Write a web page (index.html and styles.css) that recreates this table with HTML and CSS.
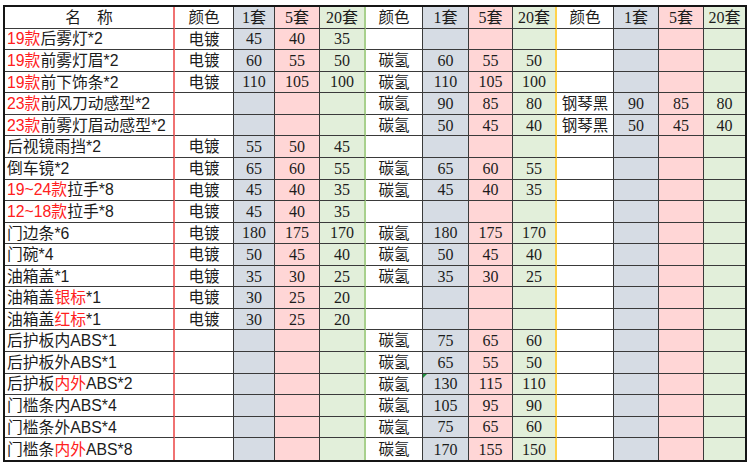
FILE: index.html
```html
<!DOCTYPE html>
<html lang="zh-CN">
<head>
<meta charset="utf-8">
<title>价格表</title>
<link rel="stylesheet" href="styles.css">
</head>
<body>
<div class="sheet">
  <div class="row head">
    <div class="c name center">名　称</div><div class="c clr">颜色</div><div class="c n">1套</div><div class="c n">5套</div><div class="c n g-end">20套</div>
    <div class="c clr">颜色</div><div class="c n">1套</div><div class="c n">5套</div><div class="c n y-end">20套</div>
    <div class="c clr">颜色</div><div class="c n">1套</div><div class="c n">5套</div><div class="c n last">20套</div>
  </div>
  <div class="row">
    <div class="c name"><span class="hl">19款</span>后雾灯*2</div><div class="c clr">电镀</div><div class="c n">45</div><div class="c n">40</div><div class="c n g-end">35</div>
    <div class="c clr"></div><div class="c n"></div><div class="c n"></div><div class="c n y-end"></div>
    <div class="c clr"></div><div class="c n"></div><div class="c n"></div><div class="c n last"></div>
  </div>
  <div class="row">
    <div class="c name"><span class="hl">19款</span>前雾灯眉*2</div><div class="c clr">电镀</div><div class="c n">60</div><div class="c n">55</div><div class="c n g-end">50</div>
    <div class="c clr">碳氢</div><div class="c n">60</div><div class="c n">55</div><div class="c n y-end">50</div>
    <div class="c clr"></div><div class="c n"></div><div class="c n"></div><div class="c n last"></div>
  </div>
  <div class="row">
    <div class="c name"><span class="hl">19款</span>前下饰条*2</div><div class="c clr">电镀</div><div class="c n">110</div><div class="c n">105</div><div class="c n g-end">100</div>
    <div class="c clr">碳氢</div><div class="c n">110</div><div class="c n">105</div><div class="c n y-end">100</div>
    <div class="c clr"></div><div class="c n"></div><div class="c n"></div><div class="c n last"></div>
  </div>
  <div class="row">
    <div class="c name"><span class="hl">23款</span>前风刀动感型*2</div><div class="c clr"></div><div class="c n"></div><div class="c n"></div><div class="c n g-end"></div>
    <div class="c clr">碳氢</div><div class="c n">90</div><div class="c n">85</div><div class="c n y-end">80</div>
    <div class="c clr">钢琴黑</div><div class="c n">90</div><div class="c n">85</div><div class="c n last">80</div>
  </div>
  <div class="row">
    <div class="c name"><span class="hl">23款</span>前雾灯眉动感型*2</div><div class="c clr"></div><div class="c n"></div><div class="c n"></div><div class="c n g-end"></div>
    <div class="c clr">碳氢</div><div class="c n">50</div><div class="c n">45</div><div class="c n y-end">40</div>
    <div class="c clr">钢琴黑</div><div class="c n">50</div><div class="c n">45</div><div class="c n last">40</div>
  </div>
  <div class="row">
    <div class="c name">后视镜雨挡*2</div><div class="c clr">电镀</div><div class="c n">55</div><div class="c n">50</div><div class="c n g-end">45</div>
    <div class="c clr"></div><div class="c n"></div><div class="c n"></div><div class="c n y-end"></div>
    <div class="c clr"></div><div class="c n"></div><div class="c n"></div><div class="c n last"></div>
  </div>
  <div class="row">
    <div class="c name">倒车镜*2</div><div class="c clr">电镀</div><div class="c n">65</div><div class="c n">60</div><div class="c n g-end">55</div>
    <div class="c clr">碳氢</div><div class="c n">65</div><div class="c n">60</div><div class="c n y-end">55</div>
    <div class="c clr"></div><div class="c n"></div><div class="c n"></div><div class="c n last"></div>
  </div>
  <div class="row">
    <div class="c name"><span class="hl">19~24款</span>拉手*8</div><div class="c clr">电镀</div><div class="c n">45</div><div class="c n">40</div><div class="c n g-end">35</div>
    <div class="c clr">碳氢</div><div class="c n">45</div><div class="c n">40</div><div class="c n y-end">35</div>
    <div class="c clr"></div><div class="c n"></div><div class="c n"></div><div class="c n last"></div>
  </div>
  <div class="row">
    <div class="c name"><span class="hl">12~18款</span>拉手*8</div><div class="c clr">电镀</div><div class="c n">45</div><div class="c n">40</div><div class="c n g-end">35</div>
    <div class="c clr"></div><div class="c n"></div><div class="c n"></div><div class="c n y-end"></div>
    <div class="c clr"></div><div class="c n"></div><div class="c n"></div><div class="c n last"></div>
  </div>
  <div class="row">
    <div class="c name">门边条*6</div><div class="c clr">电镀</div><div class="c n">180</div><div class="c n">175</div><div class="c n g-end">170</div>
    <div class="c clr">碳氢</div><div class="c n">180</div><div class="c n">175</div><div class="c n y-end">170</div>
    <div class="c clr"></div><div class="c n"></div><div class="c n"></div><div class="c n last"></div>
  </div>
  <div class="row">
    <div class="c name">门碗*4</div><div class="c clr">电镀</div><div class="c n">50</div><div class="c n">45</div><div class="c n g-end">40</div>
    <div class="c clr">碳氢</div><div class="c n">50</div><div class="c n">45</div><div class="c n y-end">40</div>
    <div class="c clr"></div><div class="c n"></div><div class="c n"></div><div class="c n last"></div>
  </div>
  <div class="row">
    <div class="c name">油箱盖*1</div><div class="c clr">电镀</div><div class="c n">35</div><div class="c n">30</div><div class="c n g-end">25</div>
    <div class="c clr">碳氢</div><div class="c n">35</div><div class="c n">30</div><div class="c n y-end">25</div>
    <div class="c clr"></div><div class="c n"></div><div class="c n"></div><div class="c n last"></div>
  </div>
  <div class="row">
    <div class="c name">油箱盖<span class="hl">银标</span>*1</div><div class="c clr">电镀</div><div class="c n">30</div><div class="c n">25</div><div class="c n g-end">20</div>
    <div class="c clr"></div><div class="c n"></div><div class="c n"></div><div class="c n y-end"></div>
    <div class="c clr"></div><div class="c n"></div><div class="c n"></div><div class="c n last"></div>
  </div>
  <div class="row">
    <div class="c name">油箱盖<span class="hl">红标</span>*1</div><div class="c clr">电镀</div><div class="c n">30</div><div class="c n">25</div><div class="c n g-end">20</div>
    <div class="c clr"></div><div class="c n"></div><div class="c n"></div><div class="c n y-end"></div>
    <div class="c clr"></div><div class="c n"></div><div class="c n"></div><div class="c n last"></div>
  </div>
  <div class="row">
    <div class="c name">后护板内ABS*1</div><div class="c clr"></div><div class="c n"></div><div class="c n"></div><div class="c n g-end"></div>
    <div class="c clr">碳氢</div><div class="c n">75</div><div class="c n">65</div><div class="c n y-end">60</div>
    <div class="c clr"></div><div class="c n"></div><div class="c n"></div><div class="c n last"></div>
  </div>
  <div class="row">
    <div class="c name">后护板外ABS*1</div><div class="c clr"></div><div class="c n"></div><div class="c n"></div><div class="c n g-end"></div>
    <div class="c clr">碳氢</div><div class="c n">65</div><div class="c n">55</div><div class="c n y-end">50</div>
    <div class="c clr"></div><div class="c n"></div><div class="c n"></div><div class="c n last"></div>
  </div>
  <div class="row">
    <div class="c name">后护板<span class="hl">内外</span>ABS*2</div><div class="c clr"></div><div class="c n"></div><div class="c n"></div><div class="c n g-end"></div>
    <div class="c clr">碳氢</div><div class="c n flag">130</div><div class="c n">115</div><div class="c n y-end">110</div>
    <div class="c clr"></div><div class="c n"></div><div class="c n"></div><div class="c n last"></div>
  </div>
  <div class="row">
    <div class="c name">门槛条内ABS*4</div><div class="c clr"></div><div class="c n"></div><div class="c n"></div><div class="c n g-end"></div>
    <div class="c clr">碳氢</div><div class="c n">105</div><div class="c n">95</div><div class="c n y-end">90</div>
    <div class="c clr"></div><div class="c n"></div><div class="c n"></div><div class="c n last"></div>
  </div>
  <div class="row">
    <div class="c name">门槛条外ABS*4</div><div class="c clr"></div><div class="c n"></div><div class="c n"></div><div class="c n g-end"></div>
    <div class="c clr">碳氢</div><div class="c n">75</div><div class="c n">65</div><div class="c n y-end">60</div>
    <div class="c clr"></div><div class="c n"></div><div class="c n"></div><div class="c n last"></div>
  </div>
  <div class="row">
    <div class="c name">门槛条<span class="hl">内外</span>ABS*8</div><div class="c clr"></div><div class="c n"></div><div class="c n"></div><div class="c n g-end"></div>
    <div class="c clr">碳氢</div><div class="c n">170</div><div class="c n">155</div><div class="c n y-end">150</div>
    <div class="c clr"></div><div class="c n"></div><div class="c n"></div><div class="c n last"></div>
  </div>
</div>
</body>
</html>
```

FILE: styles.css
```css
html, body {
  margin: 0;
  padding: 0;
  background: #ffffff;
}

body {
  padding: 5px 0 0 3px;
  font-family: "Liberation Sans", "Noto Sans CJK SC", sans-serif;
  color: #1c1c1c;
}

.sheet {
  width: 740px;
  border: 2px solid #151515;
  display: flex;
  flex-direction: column;
}

.row {
  display: grid;
  grid-template-columns: 170px 59px 41px 45px 46px 57px 46px 44px 44px 57px 45px 45px 41px;
  height: 21.571px;
}

.c {
  box-sizing: border-box;
  border-right: 1px solid #3a3a3a;
  border-bottom: 1px solid #3a3a3a;
  display: flex;
  align-items: center;
  justify-content: center;
  font-size: 15.5px;
  line-height: 1;
  white-space: nowrap;
  overflow: hidden;
  padding-top: 1px;
  position: relative;
}

.row:last-child .c {
  border-bottom: none;
}

.name {
  justify-content: flex-start;
  padding-left: 2px;
  font-size: 15.8px;
  border-right: 2px solid #f07272;
}

.name.center {
  justify-content: center;
  padding-left: 0;
}

.clr {
  background: #ffffff;
}

.n {
  font-family: "Liberation Serif", "Noto Sans CJK SC", serif;
  font-size: 16px;
}

.row > .c:nth-child(4n+3) {
  background: #d6dce4;
}

.row > .c:nth-child(4n) {
  background: #ffd6d6;
}

.row > .c:nth-child(4n+1):not(.name) {
  background: #e2efda;
}

.g-end {
  border-right: 2px solid #a8d08d;
}

.y-end {
  border-right: 2px solid #ffd24a;
}

.last {
  border-right: none;
}

.hl {
  color: #ff2020;
}

.flag::before {
  content: "";
  position: absolute;
  left: 0;
  top: 0;
  width: 0;
  height: 0;
  border-top: 4px solid #1e8f3c;
  border-right: 4px solid transparent;
}
```
